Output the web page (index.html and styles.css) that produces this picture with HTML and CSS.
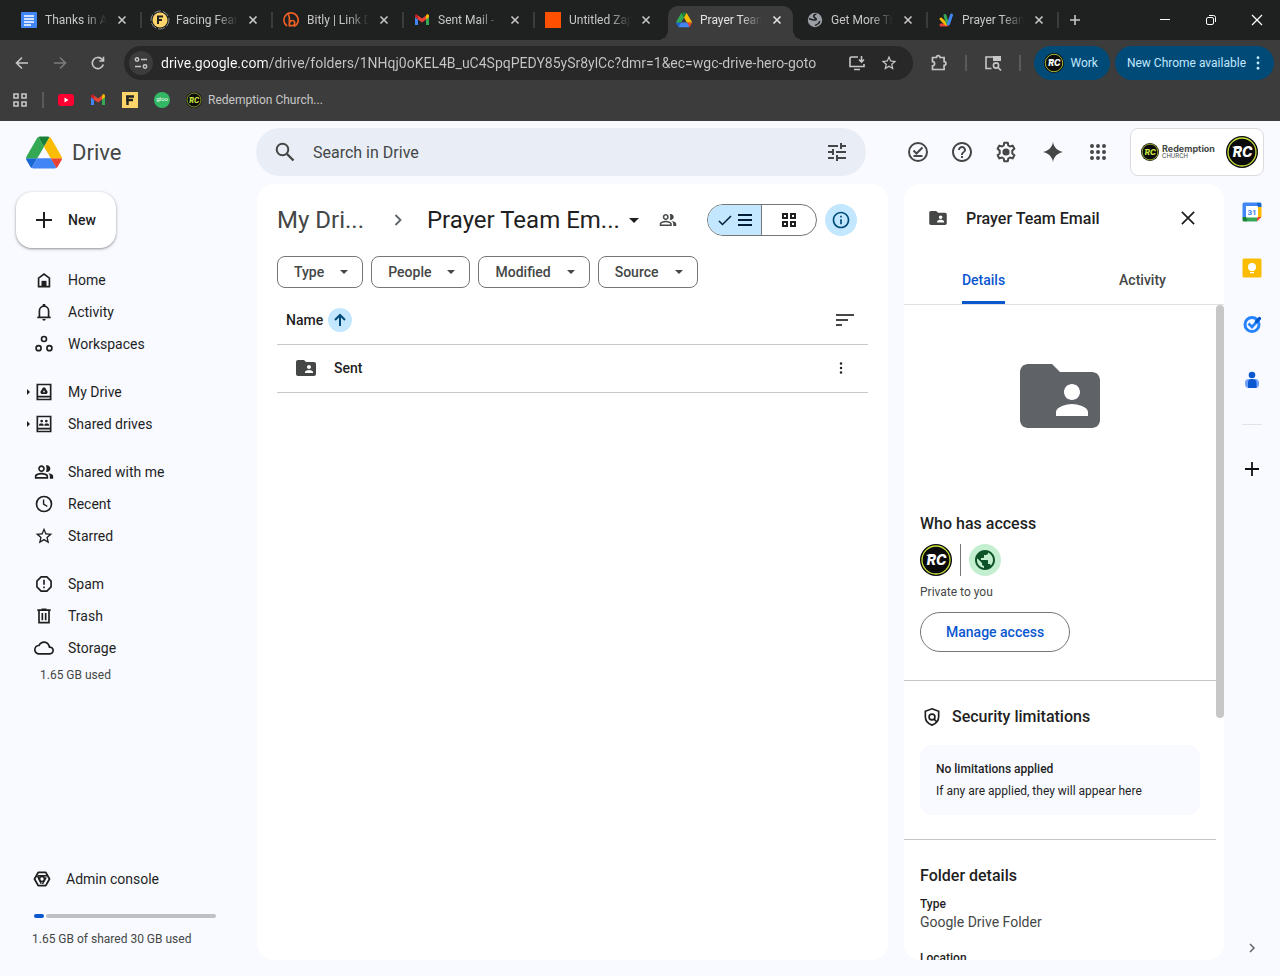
FILE: index.html
```html
<!DOCTYPE html>
<html lang="en">
<head>
  <meta charset="UTF-8">
  <meta name="viewport" content="width=device-width, initial-scale=1.0">
  <title>Prayer Team Email - Google Drive</title>
  <link rel="stylesheet" href="styles.css">
</head>
<body>

  <!-- Shared icons -->
  <svg class="sprite" width="0" height="0" aria-hidden="true">
    <symbol id="i-x" viewBox="0 0 16 16"><path d="M4.500 4.500l7 7M11.500 4.500l-7 7" stroke="currentColor" stroke-width="1.600" fill="none"/></symbol>
    <symbol id="i-gmail" viewBox="0 0 16 16"><path d="M1 3.500v9.500h3V7.500L1 5z" fill="#4285f4"/><path d="M12 13h3V5l-3 2.500z" fill="#34a853"/><path d="M12 3.700v3.800l3-2.300V4c0-1.600-1.700-2-2.600-1.300z" fill="#fbbc04"/><path d="M4 7.500V3.600l4 3 4-3v3.900l-4 3z" fill="#ea4335"/><path d="M1 4v1.200l3 2.300V3.600l-.7-.7C2.300 2.200 1 2.800 1 4z" fill="#c5221f"/></symbol>
    <symbol id="i-drive" viewBox="0 0 87.300 78"><path d="M6.600 66.850l3.850 6.650c.8 1.400 1.950 2.500 3.300 3.300L27.500 53H0c0 1.550.4 3.100 1.200 4.500z" fill="#1967d2"/><path d="M43.650 25L29.900 1.200c-1.350.8-2.500 1.900-3.300 3.300L1.200 48.500C.4 49.900 0 51.450 0 53h27.500z" fill="#34a853"/><path d="M73.550 76.800c1.350-.8 2.500-1.900 3.300-3.300l1.600-2.750L86.100 57.500c.8-1.400 1.200-2.950 1.200-4.500H59.800l5.850 11.500z" fill="#ea4335"/><path d="M43.650 25L57.400 1.200C56.050.4 54.500 0 52.900 0H34.400c-1.600 0-3.150.45-4.500 1.200z" fill="#188038"/><path d="M59.800 53H27.500L13.750 76.800c1.350.8 2.900 1.200 4.500 1.200h50.800c1.600 0 3.150-.45 4.500-1.200z" fill="#4285f4"/><path d="M73.400 26.500L60.700 4.500c-.8-1.400-1.950-2.500-3.300-3.300L43.650 25 59.800 53h27.450c0-1.550-.4-3.100-1.200-4.500z" fill="#fbbc04"/></symbol>
    <symbol id="i-rc" viewBox="0 0 32 32"><circle cx="16" cy="16" r="16" fill="#0b0b0b"/><circle cx="16" cy="16" r="14" fill="none" stroke="#c8e03c" stroke-width="1.300"/><path d="M6 10.700h8l-1 2.200H9z" fill="currentColor"/><text x="16.500" y="21.200" text-anchor="middle" class="rc-text">RC</text></symbol>
    <symbol id="i-folder" viewBox="2 4 20 16"><path d="M20 6h-8l-2-2H4c-1.100 0-2 .9-2 2v12c0 1.100.9 2 2 2h16c1.100 0 2-.9 2-2V8c0-1.100-.9-2-2-2zm-5 3c1.100 0 2 .9 2 2s-.9 2-2 2-2-.9-2-2 .9-2 2-2zm4 8h-8v-1c0-1.330 2.670-2 4-2s4 .67 4 2v1z" fill="currentColor"/></symbol>
    <symbol id="i-caret" viewBox="0 0 10 5"><path d="M0 0h10L5 5z" fill="currentColor"/></symbol>
    <symbol id="i-people" viewBox="0 0 24 24"><path fill="currentColor" d="M9 12c2.200 0 4-1.800 4-4s-1.800-4-4-4-4 1.800-4 4 1.800 4 4 4zm0-6c1.100 0 2 .9 2 2s-.9 2-2 2-2-.9-2-2 .9-2 2-2zm0 7c-2.700 0-8 1.300-8 4v3h16v-3c0-2.700-5.300-4-8-4zm6 5H3v-.99C3.200 16.300 6.300 15 9 15s5.800 1.300 6 2v1zM15.600 4c-.5 0-.9.100-1.300.2C14.700 5.300 15 6.600 15 8s-.3 2.700-.7 3.800c.4.1.8.2 1.300.2 2.200 0 4-1.800 4-4s-1.800-4-4-4zM16.700 13.200C18.100 14.100 19 15.400 19 17v3h4v-3c0-2.200-3.500-3.400-6.300-3.800z"/></symbol>
    <symbol id="i-star" viewBox="0 0 24 24"><path fill="currentColor" d="M22 9.240l-7.190-.62L12 2 9.190 8.630 2 9.240l5.460 4.730L5.820 21 12 17.270 18.180 21l-1.630-7.030L22 9.240zM12 15.400l-3.760 2.270 1-4.280-3.320-2.880 4.380-.38L12 6.100l1.710 4.040 4.380.38-3.320 2.880 1 4.280L12 15.400z"/></symbol>
    <symbol id="i-grid4" viewBox="0 0 16 16"><path d="M2 2h4v4H2zM10 2h4v4h-4zM2 10h4v4H2zM10 10h4v4h-4z" fill="none" stroke="currentColor" stroke-width="2"/></symbol>
    <symbol id="i-globe" viewBox="2 2 20 20"><path fill="currentColor" d="M12 2C6.480 2 2 6.480 2 12s4.480 10 10 10 10-4.480 10-10S17.520 2 12 2zm-1 17.930c-3.950-.49-7-3.850-7-7.930 0-.62.08-1.210.21-1.790L9 15v1c0 1.100.9 2 2 2v1.930zm6.900-2.540c-.26-.81-1-1.390-1.900-1.390h-1v-3c0-.55-.45-1-1-1H8v-2h2c.55 0 1-.45 1-1V7h2c1.100 0 2-.9 2-2v-.41c2.930 1.190 5 4.060 5 7.410 0 2.080-.8 3.970-2.100 5.390z"/></symbol>
    <symbol id="i-chevron" viewBox="0 0 24 24"><path d="M9 6l6 6-6 6" fill="none" stroke="currentColor" stroke-width="2.200"/></symbol>
    <symbol id="i-dots" viewBox="0 0 4 16"><circle cx="2" cy="2" r="1.600"/><circle cx="2" cy="8" r="1.600"/><circle cx="2" cy="14" r="1.600"/></symbol>
  </svg>

  <!-- Tab strip -->
  <div class="tabstrip">
    <div class="tab">
      <svg class="fav" viewBox="0 0 16 16"><rect width="16" height="16" rx="1" fill="#4285f4"/><path d="M3 4h10M3 7h10M3 10h10M3 13h7" stroke="#fff" stroke-width="1.500"/></svg>
      <span class="tab-title">Thanks in A</span>
      <button class="tab-close" aria-label="Close tab"><svg><use href="#i-x"/></svg></button>
    </div>
    <div class="tab">
      <svg class="fav" viewBox="0 0 16 16"><circle cx="8" cy="8" r="9" fill="none" stroke="#8a8a8a" stroke-dasharray="7 2"/><circle cx="8" cy="8" r="7.500" fill="#fdd46a"/><path d="M5 4.500h6M5 8h5M6 4v8" stroke="#222" stroke-width="2"/></svg>
      <span class="tab-title">Facing Fear</span>
      <button class="tab-close" aria-label="Close tab"><svg><use href="#i-x"/></svg></button>
    </div>
    <div class="tab">
      <svg class="fav" viewBox="0 0 16 16"><path d="M4 14a7.200 7.200 0 1 1 7 .6M5.200 2.500c1 1 1.200 2.500 1.200 4v5.500M6.500 14.500c-1-3 .5-6 3-6 2 0 2.500 2 2 3.500-.6 1.800-3 2.300-4.500 1" fill="none" stroke="#ee6123" stroke-width="1.700"/></svg>
      <span class="tab-title">Bitly | Link D</span>
      <button class="tab-close" aria-label="Close tab"><svg><use href="#i-x"/></svg></button>
    </div>
    <div class="tab">
      <svg class="fav"><use href="#i-gmail"/></svg>
      <span class="tab-title">Sent Mail -</span>
      <button class="tab-close" aria-label="Close tab"><svg><use href="#i-x"/></svg></button>
    </div>
    <div class="tab tab-before">
      <svg class="fav" viewBox="0 0 16 16"><rect width="16" height="16" fill="#ff4f00"/></svg>
      <span class="tab-title">Untitled Zap</span>
      <button class="tab-close" aria-label="Close tab"><svg><use href="#i-x"/></svg></button>
    </div>
    <div class="tab tab-active">
      <svg class="fav"><use href="#i-drive"/></svg>
      <span class="tab-title">Prayer Team</span>
      <button class="tab-close" aria-label="Close tab"><svg><use href="#i-x"/></svg></button>
    </div>
    <div class="tab">
      <svg class="fav" viewBox="0 0 16 16"><circle cx="8" cy="8" r="7.200" fill="#9aa0a6"/><path d="M9.500 2.200C6.500 2 6 4.500 7.500 5.500S10 7.500 8.500 8 4 7 2 6.800M8 13.500c2-1 5-2 4.500-4.500" stroke="#1f2020" stroke-width="1.600" fill="none"/></svg>
      <span class="tab-title">Get More Tr</span>
      <button class="tab-close" aria-label="Close tab"><svg><use href="#i-x"/></svg></button>
    </div>
    <div class="tab">
      <svg class="fav" viewBox="0 0 16 16"><g stroke-linecap="round" stroke-width="3"><path d="M3 13h6" stroke="#ea4335"/><path d="M3 7l5 5" stroke="#fbbc04"/><path d="M7 3.500l2.500 8" stroke="#34a853"/><path d="M13.500 3L10.500 12" stroke="#4285f4"/></g></svg>
      <span class="tab-title">Prayer Team</span>
      <button class="tab-close" aria-label="Close tab"><svg><use href="#i-x"/></svg></button>
    </div>
    <button class="tab-new" aria-label="New tab"><svg viewBox="0 0 12 12"><path d="M6 1v10M1 6h10" stroke="currentColor" stroke-width="1.600"/></svg></button>
    <div class="window-controls">
      <button aria-label="Minimize"><svg viewBox="0 0 12 12"><path d="M1 5.500h10" stroke="#fff"/></svg></button>
      <button aria-label="Restore"><svg viewBox="0 0 12 12"><rect x="1.500" y="3.500" width="7" height="7" rx="1.500" fill="none" stroke="#fff"/><path d="M4 1.500h4.500a2 2 0 0 1 2 2V8" fill="none" stroke="#fff"/></svg></button>
      <button aria-label="Close"><svg viewBox="0 0 12 12"><path d="M1 1l10 10M11 1L1 11" stroke="#fff" stroke-width="1.200"/></svg></button>
    </div>
  </div>

  <!-- Toolbar -->
  <div class="toolbar">
    <button class="nav-btn" aria-label="Back"><svg viewBox="0 0 16 16"><path d="M14 8H3M8 2.500L2.500 8 8 13.500" fill="none" stroke="currentColor" stroke-width="1.600"/></svg></button>
    <button class="nav-btn nav-off" aria-label="Forward"><svg viewBox="0 0 16 16"><path d="M2 8h11M8 2.500L13.500 8 8 13.500" fill="none" stroke="currentColor" stroke-width="1.600"/></svg></button>
    <button class="nav-btn" aria-label="Reload"><svg viewBox="0 0 16 16"><path d="M13.300 9.500A5.600 5.600 0 1 1 12 4.200L13.500 6M13.500 1.800V6H9.300" fill="none" stroke="currentColor" stroke-width="1.600"/></svg></button>
    <div class="omnibox">
      <button class="site-info" aria-label="Site information"><svg viewBox="0 0 16 16"><g fill="none" stroke="currentColor" stroke-width="1.500"><circle cx="4" cy="4.500" r="1.700"/><path d="M8 4.500h6M2 11.500h6"/><circle cx="12" cy="11.500" r="1.700"/></g></svg></button>
      <input class="url" type="text" aria-label="Address" value="drive.google.com/drive/folders/1NHqj0oKEL4B_uC4SpqPEDY85ySr8ylCc?dmr=1&amp;ec=wgc-drive-hero-goto">
      <button class="omni-btn" aria-label="Install"><svg viewBox="0 0 18 18"><path d="M10 3H3.500a1.500 1.500 0 0 0-1.500 1.500v8h14V10M6 15.500h6M13.500 2v6M11 5.500L13.500 8 16 5.500" fill="none" stroke="currentColor" stroke-width="1.600"/></svg></button>
      <button class="omni-btn" aria-label="Bookmark"><svg><use href="#i-star"/></svg></button>
    </div>
    <button class="tool-btn" aria-label="Extensions"><svg viewBox="0 0 18 18"><path d="M2.500 3.500h4a1.800 1.800 0 0 1 3.600 0h4v4.200a1.800 1.800 0 0 1 0 3.600v4.200H2.500v-3.700a2 2 0 0 0 0-4.200z" fill="none" stroke="currentColor" stroke-width="1.700"/></svg></button>
    <span class="bar-sep"></span>
    <button class="tool-btn" aria-label="Search tabs"><svg viewBox="0 0 18 18"><path d="M7.500 14.500H2V3h14v4" fill="none" stroke="currentColor" stroke-width="1.600"/><path d="M9 2h8v5H9z" fill="currentColor"/><circle cx="12" cy="11.500" r="2.600" fill="none" stroke="currentColor" stroke-width="1.600"/><path d="M14 13.500l3 3" stroke="currentColor" stroke-width="1.700"/></svg></button>
    <span class="bar-sep"></span>
    <button class="pill pill-work"><svg class="pill-avatar rc"><use href="#i-rc"/></svg>Work</button>
    <button class="pill pill-update">New Chrome available<svg class="pill-dots" fill="#c2e7ff"><use href="#i-dots"/></svg></button>
  </div>

  <!-- Bookmarks -->
  <nav class="bookmarks">
    <button class="bm bm-apps" aria-label="Apps"><svg viewBox="0 0 16 16"><path d="M2 2h4v4H2zM10 2h4v4h-4zM2 10h4v4H2zM10 10h4v4h-4z" fill="none" stroke="#c7c7c7" stroke-width="1.600"/></svg></button>
    <span class="bar-sep bm-sep"></span>
    <a class="bm" href="#" aria-label="YouTube"><svg viewBox="0 0 16 16"><rect y="2" width="16" height="12" rx="3" fill="#ff0033"/><path d="M6.500 5.500v5l4-2.500z" fill="#fff"/></svg></a>
    <a class="bm" href="#" aria-label="Gmail"><svg><use href="#i-gmail"/></svg></a>
    <a class="bm" href="#" aria-label="Faithlife"><svg viewBox="0 0 16 16"><rect width="16" height="16" fill="#fdd46a"/><path d="M4 4.500h8M4 8h7M5.500 4v9" stroke="#222" stroke-width="2.400"/></svg></a>
    <a class="bm" href="#"><span class="gloo">gloo</span></a>
    <a class="bm" href="#"><svg class="rc rc-lime"><use href="#i-rc"/></svg><span>Redemption Church...</span></a>
  </nav>

  <!-- Drive -->
  <div class="drive">
    <header class="header">
      <a class="brand" href="#"><svg class="brand-logo"><use href="#i-drive"/></svg><span>Drive</span></a>
      <form class="search">
        <button type="button" aria-label="Search"><svg viewBox="0 0 24 24"><circle cx="9.500" cy="9.500" r="5.800" fill="none" stroke="currentColor" stroke-width="2"/><path d="M14 14l6.500 6.500" stroke="currentColor" stroke-width="2.400"/></svg></button>
        <input type="text" placeholder="Search in Drive" aria-label="Search in Drive">
        <button type="button" aria-label="Advanced search"><svg viewBox="0 0 24 24"><path fill="currentColor" d="M3 17v2h6v-2H3zM3 5v2h10V5H3zm10 16v-2h8v-2h-8v-2h-2v6h2zM7 9v2H3v2h4v2h2V9H7zm14 4v-2H11v2h10zm-6-4h2V7h4V5h-4V3h-2v6z"/></svg></button>
      </form>
      <div class="header-tools">
        <button aria-label="Ready for offline"><svg viewBox="0 0 24 24"><circle cx="12" cy="12" r="9" fill="none" stroke="currentColor" stroke-width="2"/><path d="M7.500 10.500l3 3 6-6M7.500 16h9" fill="none" stroke="currentColor" stroke-width="2"/></svg></button>
        <button aria-label="Support"><svg viewBox="0 0 24 24"><path fill="currentColor" d="M11 18h2v-2h-2v2zm1-16C6.480 2 2 6.480 2 12s4.480 10 10 10 10-4.480 10-10S17.520 2 12 2zm0 18c-4.410 0-8-3.590-8-8s3.590-8 8-8 8 3.590 8 8-3.590 8-8 8zm0-14c-2.210 0-4 1.790-4 4h2c0-1.100.9-2 2-2s2 .9 2 2c0 2-3 1.750-3 5h2c0-2.250 3-2.500 3-5 0-2.210-1.790-4-4-4z"/></svg></button>
        <button aria-label="Settings"><svg viewBox="0 0 24 24"><path fill="none" stroke="currentColor" stroke-width="2" stroke-linejoin="round" d="M10.200 2.800h3.600l.5 2.700 1.700 1 2.600-.9 1.800 3.100-2.100 1.800v3l2.100 1.800-1.800 3.100-2.600-.9-1.700 1-.5 2.700h-3.600l-.5-2.700-1.700-1-2.600.9-1.800-3.100 2.100-1.800v-3L3.600 8.700l1.800-3.100 2.600.9 1.700-1z"/><circle cx="12" cy="12" r="3.600" fill="currentColor"/></svg></button>
        <button class="tool-gemini" aria-label="Gemini"><svg viewBox="0 0 24 24"><path fill="currentColor" d="M12 2c.8 5.200 4.800 9.200 10 10-5.200.8-9.200 4.800-10 10-.8-5.200-4.800-9.200-10-10 5.200-.8 9.200-4.800 10-10z"/></svg></button>
        <button class="tool-apps" aria-label="Google apps"><svg viewBox="0 0 24 24"><path d="M6 6h0M12 6h0M18 6h0M6 12h0M12 12h0M18 12h0M6 18h0M12 18h0M18 18h0" stroke="currentColor" stroke-width="4" stroke-linecap="round"/></svg></button>
        <button class="account" aria-label="Account">
          <svg class="org-mark rc rc-lime"><use href="#i-rc"/></svg>
          <span class="org"><b>Redemption</b><small>CHURCH</small></span>
          <svg class="avatar rc"><use href="#i-rc"/></svg>
        </button>
      </div>
    </header>

    <aside class="sidebar">
      <button class="new-btn"><svg viewBox="0 0 24 24"><path d="M12 4v16M4 12h16" stroke="currentColor" stroke-width="2"/></svg>New</button>

      <ul class="nav">
        <li><a href="#"><svg viewBox="0 0 24 24"><path d="M5.500 9.800V20h13V9.800L12 4.800z" fill="none" stroke="currentColor" stroke-width="2"/><path d="M9 13h6v7H9z" fill="currentColor"/></svg>Home</a></li>
        <li><a href="#"><svg viewBox="0 0 24 24"><path d="M4 18.500h16M6.500 18v-7.500a5.500 5.500 0 0 1 11 0V18" fill="none" stroke="currentColor" stroke-width="2"/><path d="M10.500 2.500h3V6h-3zM10 20.500h4a2 2 0 0 1-4 0z" fill="currentColor"/></svg>Activity</a></li>
        <li><a href="#"><svg viewBox="0 0 24 24"><g fill="none" stroke="currentColor" stroke-width="2"><circle cx="12" cy="6" r="3"/><circle cx="5.500" cy="17" r="3"/><circle cx="18.500" cy="17" r="3"/></g></svg>Workspaces</a></li>
      </ul>
      <ul class="nav">
        <li class="has-children"><a href="#"><svg viewBox="0 0 24 24"><path d="M4 3h16v18H4zM4 17.500h16" fill="none" stroke="currentColor" stroke-width="2"/><path d="M10.800 6.500h2.400L16.500 12l-1.200 2.300H8.700L7.500 12zM12 9.500l-1.300 2.700h2.600z" fill="currentColor" fill-rule="evenodd"/></svg>My Drive</a></li>
        <li class="has-children"><a href="#"><svg viewBox="0 0 24 24"><path d="M4 3h16v18H4zM4 17.500h16" fill="none" stroke="currentColor" stroke-width="2"/><g fill="currentColor"><circle cx="9.200" cy="8.500" r="1.600"/><circle cx="14.800" cy="8.500" r="1.600"/><path d="M6 14v-1c0-2 5.500-2 5.500 0v1zM12.500 14v-1c0-2 5.500-2 5.500 0v1z"/></g></svg>Shared drives</a></li>
      </ul>
      <ul class="nav">
        <li><a href="#"><svg><use href="#i-people"/></svg>Shared with me</a></li>
        <li><a href="#"><svg viewBox="0 0 24 24"><circle cx="12" cy="12" r="9" fill="none" stroke="currentColor" stroke-width="2"/><path d="M11.500 6.500V12l4.500 3" fill="none" stroke="currentColor" stroke-width="1.700"/></svg>Recent</a></li>
        <li><a href="#"><svg><use href="#i-star"/></svg>Starred</a></li>
      </ul>
      <ul class="nav">
        <li><a href="#"><svg viewBox="0 0 24 24"><path d="M8.500 3.500h7l5 5v7l-5 5h-7l-5-5v-7z" fill="none" stroke="currentColor" stroke-width="2" stroke-linejoin="round"/><path d="M11 7h2v6h-2zM11 15h2v2h-2z" fill="currentColor"/></svg>Spam</a></li>
        <li><a href="#"><svg viewBox="0 0 24 24"><path d="M4 5h16M6 5v15h12V5M10 8.500v8.500M14 8.500v8.500" fill="none" stroke="currentColor" stroke-width="2"/><path d="M9 3h6v2H9z" fill="currentColor"/></svg>Trash</a></li>
        <li><a href="#"><svg viewBox="0 0 24 24"><path fill="currentColor" d="M19.350 10.040C18.670 6.590 15.640 4 12 4 9.110 4 6.600 5.640 5.350 8.040 2.340 8.360 0 10.910 0 14c0 3.310 2.690 6 6 6h13c2.760 0 5-2.240 5-5 0-2.640-2.050-4.780-4.650-4.960zM19 18H6c-2.210 0-4-1.790-4-4 0-2.050 1.530-3.760 3.560-3.970l1.070-.11.500-.95C8.080 7.140 9.940 6 12 6c2.620 0 4.880 1.860 5.390 4.430l.3 1.500 1.530.11c1.560.1 2.780 1.410 2.780 2.960 0 1.650-1.350 3-3 3z"/></svg>Storage</a></li>
      </ul>
      <p class="used">1.65 GB used</p>

      <div class="sidebar-foot">
        <a class="admin" href="#"><svg viewBox="0 0 24 24"><path d="M7.500 4h9l4.500 8-4.500 8h-9L3 12z" fill="none" stroke="currentColor" stroke-width="2.200" stroke-linejoin="round"/><path d="M7.500 8h11M6.500 8l4.500 9.500M17 10L12.500 18" stroke="currentColor" stroke-width="1.800"/><circle cx="12" cy="12" r="3" fill="none" stroke="currentColor" stroke-width="2"/></svg>Admin console</a>
        <div class="meter"><span class="meter-used" style="width: 5.5%"></span><span class="meter-free"></span></div>
        <p>1.65 GB of shared 30 GB used</p>
      </div>
    </aside>

    <main class="files">
      <div class="files-head">
        <nav class="crumbs">
          <a class="crumb-parent" href="#">My Dri...</a>
          <svg class="crumb-chevron"><use href="#i-chevron"/></svg>
          <button class="crumb-current">Prayer Team Em...<svg class="caret"><use href="#i-caret"/></svg></button>
          <button class="share-btn" aria-label="Manage people"><svg><use href="#i-people"/></svg></button>
        </nav>
        <div class="view-toggle">
          <button class="on" aria-label="List layout"><svg class="tick" viewBox="0 0 14 14"><path d="M1 8l3.500 3.500L13 3" fill="none" stroke="currentColor" stroke-width="1.500"/></svg><svg class="lines" viewBox="0 0 14 14"><path d="M0 2h14M0 7h14M0 12h14" stroke="currentColor" stroke-width="2"/></svg></button>
          <button aria-label="Grid layout"><svg class="squares"><use href="#i-grid4"/></svg></button>
        </div>
        <button class="info-btn" aria-label="View details"><svg viewBox="0 0 24 24"><path fill="currentColor" d="M11 7h2v2h-2zm0 4h2v6h-2zm1-9C6.480 2 2 6.480 2 12s4.480 10 10 10 10-4.480 10-10S17.520 2 12 2zm0 18c-4.410 0-8-3.590-8-8s3.590-8 8-8 8 3.590 8 8-3.590 8-8 8z"/></svg></button>
      </div>

      <div class="chips">
        <button>Type<svg><use href="#i-caret"/></svg></button>
        <button>People<svg><use href="#i-caret"/></svg></button>
        <button>Modified<svg><use href="#i-caret"/></svg></button>
        <button>Source<svg><use href="#i-caret"/></svg></button>
      </div>

      <table class="list">
        <thead>
          <tr>
            <th><button class="sort-name">Name<span class="sort-dir"><svg viewBox="0 0 16 16"><path d="M8 14V3M3 8l5-5 5 5" fill="none" stroke="currentColor" stroke-width="2"/></svg></span></button></th>
            <th class="end"><button class="sort-btn" aria-label="Sort"><svg viewBox="0 0 18 12"><path d="M0 1h18M0 6h12M0 11h6" stroke="currentColor" stroke-width="2"/></svg></button></th>
          </tr>
        </thead>
        <tbody>
          <tr>
            <td><a class="file" href="#"><svg><use href="#i-folder"/></svg>Sent</a></td>
            <td class="end"><button class="more-btn" aria-label="More actions"><svg fill="#1f1f1f"><use href="#i-dots"/></svg></button></td>
          </tr>
        </tbody>
      </table>
    </main>

    <section class="details">
      <div class="details-head">
        <svg class="head-folder"><use href="#i-folder"/></svg>
        <h2>Prayer Team Email</h2>
        <button aria-label="Close details"><svg viewBox="0 0 16 16"><path d="M1 1l14 14M15 1L1 15" stroke="currentColor" stroke-width="2"/></svg></button>
      </div>
      <div class="details-tabs">
        <button class="selected"><span>Details</span></button>
        <button><span>Activity</span></button>
      </div>
      <div class="details-scroll">
        <div class="details-body">
          <div class="access">
            <svg class="big-folder"><use href="#i-folder"/></svg>
            <h3>Who has access</h3>
            <div class="who"><svg class="avatar rc"><use href="#i-rc"/></svg><span class="who-sep"></span><span class="public"><svg><use href="#i-globe"/></svg></span></div>
            <p>Private to you</p>
            <button class="manage">Manage access</button>
          </div>
          <div class="security">
            <h3><svg viewBox="0 0 24 24"><path d="M12 2.200l8 3v6.300c0 5-3.200 8.800-8 10.300-4.800-1.500-8-5.300-8-10.300V5.200z" fill="none" stroke="currentColor" stroke-width="2"/><circle cx="12" cy="12" r="3.500" fill="none" stroke="currentColor" stroke-width="2"/><path d="M14.500 14.500l3.500 3.500" stroke="currentColor" stroke-width="2"/></svg>Security limitations</h3>
            <div class="note">
              <strong>No limitations applied</strong>
              <p>If any are applied, they will appear here</p>
            </div>
          </div>
          <div class="folder-info">
            <h3>Folder details</h3>
            <dl>
              <dt>Type</dt>
              <dd>Google Drive Folder</dd>
              <dt>Location</dt>
            </dl>
          </div>
        </div>
        <div class="scrollbar"><span></span></div>
      </div>
    </section>

    <aside class="rail">
      <button aria-label="Calendar"><svg viewBox="0 0 20 20"><path d="M2 .5h13v4.500H5V15H.5V2A1.500 1.500 0 0 1 2 .5z" fill="#4285f4"/><path d="M15 .5h3A1.500 1.500 0 0 1 19.500 2v3H15z" fill="#1967d2"/><path d="M15 5h4.500v10H15z" fill="#fbbc04"/><path d="M5 15h10v4.500H5z" fill="#34a853"/><path d="M.5 15H5v4.500H2A1.500 1.500 0 0 1 .5 18z" fill="#188038"/><path d="M15 15h4.500L15 19.500z" fill="#ea4335"/><path d="M4 4h12v11.500H4z" fill="#fff"/><text x="10" y="13" text-anchor="middle" class="cal-text">31</text></svg></button>
      <button aria-label="Keep"><svg viewBox="0 0 20 20"><rect x=".5" y=".5" width="19" height="19" rx="1.500" fill="#fbbc04"/><circle cx="10" cy="9" r="4" fill="#fff"/><path d="M8 11h4v2H8zM8 14h4v1.300H8z" fill="#fff"/></svg></button>
      <button aria-label="Tasks"><svg viewBox="0 0 20 20"><circle cx="10" cy="10.500" r="7" fill="none" stroke="#2684fc" stroke-width="3"/><path d="M6.500 9.500l3.500 3.500 4.500-5" fill="none" stroke="#2684fc" stroke-width="2.800"/><path d="M14.500 7.500l3-3" stroke="#0057cc" stroke-width="3.200" stroke-linecap="round"/></svg></button>
      <button aria-label="Contacts"><svg viewBox="0 0 20 20"><circle cx="10" cy="5" r="3.300" fill="#0b57d0"/><rect x="3" y="9" width="14" height="9" rx="4" fill="#6ea0ff"/><path d="M10 9c3 0 4.500 1.500 4.500 4v5H6v-5c0-2.500 1-4 4-4z" fill="#0b57d0"/></svg></button>
      <hr>
      <button aria-label="Get add-ons"><svg viewBox="0 0 20 20"><path d="M10 3v14M3 10h14" stroke="#111" stroke-width="1.800"/></svg></button>
      <button class="rail-hide" aria-label="Hide side panel"><svg class="hide-icon"><use href="#i-chevron"/></svg></button>
    </aside>
  </div>
</body>
</html>
```
FILE: styles.css
```css
* {
  box-sizing: border-box;
}

body {
  margin: 0;
  height: 100vh;
  display: flex;
  flex-direction: column;
  overflow: hidden;
  background: #f8faff;
  color: #1f1f1f;
  font-family: Roboto, Arial, sans-serif;
  font-size: 14px;
}

button {
  display: flex;
  align-items: center;
  justify-content: center;
  margin: 0;
  padding: 0;
  border: none;
  background: none;
  color: inherit;
  font: inherit;
  cursor: pointer;
}

input {
  min-width: 0;
  padding: 0;
  border: none;
  outline: none;
  background: none;
  font: inherit;
}

a {
  color: inherit;
  text-decoration: none;
}

p, h2, h3, ul, dl, dd {
  margin: 0;
  padding: 0;
}

svg {
  flex: none;
  overflow: visible;
}

.sprite {
  position: absolute;
}

.rc {
  color: #fff;
}

.rc-lime {
  color: #c8e03c;
}

.rc-text {
  font: italic 800 14px Inter, sans-serif;
  fill: currentColor;
}

/* Browser tabs */
.tabstrip,
.toolbar,
.bookmarks {
  flex: none;
  display: flex;
  align-items: center;
  font-size: 12px;
  color: #c7c7c7;
}

.tabstrip {
  height: 40px;
  padding-left: 10px;
  background: #1f2020;
}

.tab {
  position: relative;
  flex: 0 1 131px;
  min-width: 0;
  display: flex;
  align-items: center;
  height: 34px;
  margin-top: 6px;
  padding: 0 11px 6px;
  border-radius: 10px 10px 0 0;
}

.tab::after {
  content: "";
  position: absolute;
  right: -1px;
  top: 6px;
  width: 2px;
  height: 16px;
  background: #3c3c3c;
}

.tab-before::after {
  display: none;
}

.tab-active {
  flex-basis: 125px;
  margin-right: 3px;
  margin-left: 3px;
  padding: 0 8px 6px;
  color: #e3e3e3;
  background: #3c3c3c;
}

/* Flared feet of the open tab */
.tab-active::before,
.tab-active::after {
  content: "";
  position: absolute;
  top: auto;
  bottom: 0;
  width: 10px;
  height: 10px;
}

.tab-active::before {
  left: -10px;
  background: radial-gradient(circle at 0 0, transparent 10px, #3c3c3c 10px);
}

.tab-active::after {
  right: -10px;
  background: radial-gradient(circle at 100% 0, transparent 10px, #3c3c3c 10px);
}

.fav {
  width: 16px;
  height: 16px;
}

.tab-title {
  flex: 1;
  min-width: 0;
  margin: 0 7px 0 8px;
  overflow: hidden;
  white-space: nowrap;
  -webkit-mask-image: linear-gradient(to right, #000 65%, transparent);
  mask-image: linear-gradient(to right, #000 65%, transparent);
}

.tab-close,
.tab-close svg {
  width: 16px;
  height: 16px;
}

.tab-new {
  width: 34px;
  height: 34px;
}

.tab-new svg,
.window-controls svg {
  width: 12px;
  height: 12px;
}

.window-controls {
  display: flex;
  margin-left: auto;
}

.window-controls button {
  width: 46px;
  height: 40px;
}

/* Browser toolbar */
.toolbar {
  height: 46px;
  padding: 0 6px 0 7px;
  background: #3c3c3c;
}

.nav-btn {
  width: 30px;
  height: 30px;
  margin-right: 8px;
}

.nav-btn svg {
  width: 16px;
  height: 16px;
}

.nav-off {
  color: #7c7c7c;
}

.omnibox {
  flex: 1;
  display: flex;
  align-items: center;
  height: 34px;
  margin: 0 9px 0 3px;
  padding: 0 8px 0 5px;
  border-radius: 17px;
  background: #282828;
}

.site-info {
  width: 24px;
  height: 24px;
  border-radius: 50%;
  background: #3c3c3c;
}

.site-info svg {
  width: 16px;
  height: 16px;
}

.url {
  flex: 1;
  margin-left: 8px;
  font-size: 14px;
  color: transparent;
  background: linear-gradient(to right, #fff 106px, #c7c7c7 106px);
  -webkit-background-clip: text;
  background-clip: text;
}

.omni-btn {
  width: 32px;
  height: 32px;
}

.omni-btn svg,
.tool-btn svg {
  width: 18px;
  height: 18px;
}

.tool-btn {
  width: 34px;
  height: 34px;
}

.bar-sep {
  width: 2px;
  height: 16px;
  margin: 0 9px;
  background: #5a5a5a;
}

.pill {
  height: 34px;
  border-radius: 17px;
  background: #004a77;
  color: #c2e7ff;
}

.pill-work {
  margin-left: 4px;
  padding: 0 12px 0 10px;
}

.pill-avatar {
  width: 20px;
  height: 20px;
  margin-right: 6px;
}

.pill-update {
  margin-left: 5px;
  padding: 0 14px 0 12px;
}

.pill-dots {
  width: 4px;
  height: 14px;
  margin-left: 10px;
}

/* Bookmarks bar */
.bookmarks {
  height: 35px;
  padding: 0 12px 7px;
  background: #3c3c3c;
}

.bm {
  display: flex;
  align-items: center;
  gap: 6px;
  margin-right: 16px;
}

.bm svg {
  width: 16px;
  height: 16px;
}

.bm-apps {
  margin-right: 5px;
}

.bm-sep {
  margin-right: 14px;
}

.gloo {
  width: 16px;
  height: 16px;
  border-radius: 50%;
  background: #34b765;
  color: #fff;
  font-size: 6px;
  line-height: 14px;
  text-align: center;
}

/* Drive layout */
.drive {
  flex: 1;
  min-height: 0;
  display: grid;
  grid-template-columns: 257px 1fr 320px 56px;
  grid-template-rows: 63px 1fr;
}

.header {
  grid-column: 1 / -1;
  display: flex;
  align-items: center;
  padding: 7px 16px 8px 26px;
  color: #444746;
}

.brand {
  display: flex;
  align-items: center;
  gap: 10px;
  width: 230px;
  font-size: 22px;
}

.brand-logo {
  width: 36px;
  height: 33px;
}

.search {
  flex: 1;
  display: flex;
  align-items: center;
  height: 48px;
  padding: 0 9px;
  border-radius: 24px;
  background: #e9eef6;
}

.search button,
.header-tools > button {
  width: 40px;
  height: 40px;
}

.search svg,
.header-tools svg {
  width: 24px;
  height: 24px;
}

.search input {
  flex: 1;
  margin-left: 8px;
  font-size: 16px;
  color: #1f1f1f;
}

.search input::placeholder {
  color: #444746;
  opacity: 1;
}

.header-tools {
  display: flex;
  align-items: center;
  gap: 4px;
  margin-left: 32px;
}

.header-tools .tool-gemini {
  margin: 0 1px 0 3px;
}

.header-tools .account {
  justify-content: flex-start;
  width: 134px;
  height: 48px;
  margin-left: 8px;
  padding: 0 5px 0 10px;
  border: 1px solid #dadce0;
  border-radius: 8px;
  background: #fff;
}

.header-tools .org-mark {
  width: 18px;
  height: 18px;
}

.org {
  margin-left: 3px;
  text-align: left;
  font-family: Inter, sans-serif;
  font-size: 9px;
  line-height: 8px;
}

.org b,
.org small {
  display: block;
}

.org small {
  font-size: 6px;
  line-height: 6px;
}

.header-tools .avatar,
.avatar {
  width: 32px;
  height: 32px;
}

.account .avatar {
  margin-left: auto;
}

/* Sidebar */
.sidebar {
  display: flex;
  flex-direction: column;
  padding: 8px 16px 29px;
}

.new-btn {
  align-self: flex-start;
  gap: 12px;
  height: 56px;
  margin-bottom: 16px;
  padding: 0 20px 0 16px;
  border-radius: 16px;
  background: #fff;
  box-shadow: 0 1px 2px rgba(60, 64, 67, 0.4), 0 1px 3px 1px rgba(60, 64, 67, 0.15);
  font-weight: 500;
}

.new-btn svg {
  width: 24px;
  height: 24px;
}

.nav {
  margin-bottom: 16px;
  list-style: none;
}

.nav a,
.admin {
  display: flex;
  align-items: center;
  gap: 14px;
  height: 32px;
  padding-left: 18px;
}

.nav svg {
  width: 20px;
  height: 20px;
}

.has-children {
  position: relative;
}

.has-children::before {
  content: "";
  position: absolute;
  left: 11px;
  top: 13px;
  border: 3px solid transparent;
  border-left-color: #1f1f1f;
  border-right: none;
}

.used {
  margin: -13px 0 0 24px;
  font-size: 12px;
  line-height: 16px;
  color: #444746;
}

.sidebar-foot {
  margin-top: auto;
}

.admin {
  padding-left: 16px;
}

.admin svg {
  width: 20px;
  height: 20px;
}

.meter {
  display: flex;
  gap: 2px;
  height: 4px;
  margin: 19px 25px 13px 18px;
}

.meter span {
  border-radius: 2px;
}

.meter-used {
  background: #0b57d0;
}

.meter-free {
  flex: 1;
  background: #bdc1c6;
}

.sidebar-foot p {
  margin-left: 16px;
  font-size: 12px;
  line-height: 16px;
  color: #444746;
}

/* File list */
.files {
  margin: 0 16px 16px 0;
  padding: 16px 20px;
  border-radius: 16px;
  background: #fff;
}

.files-head {
  display: flex;
  align-items: center;
  height: 40px;
  padding-right: 11px;
}

.crumbs {
  flex: 1;
  display: flex;
  align-items: center;
  font-size: 24px;
  white-space: nowrap;
}

.crumb-parent {
  color: #444746;
}

.crumb-chevron {
  width: 20px;
  height: 20px;
  margin: 0 19px 0 24px;
  color: #5f6368;
}

.caret {
  width: 10px;
  height: 5px;
  margin-left: 9px;
}

.share-btn {
  margin-left: 20px;
  color: #444746;
}

.share-btn svg {
  width: 18px;
  height: 18px;
}

.view-toggle {
  display: flex;
  height: 32px;
  border: 1px solid #747775;
  border-radius: 16px;
  overflow: hidden;
}

.view-toggle button {
  gap: 6px;
  width: 54px;
}

.view-toggle .on {
  border-right: 1px solid #747775;
  background: #c2e7ff;
  color: #001d35;
}

.tick,
.lines {
  width: 14px;
  height: 14px;
}

.squares {
  width: 16px;
  height: 16px;
}

.info-btn {
  width: 32px;
  height: 32px;
  margin-left: 8px;
  border-radius: 50%;
  background: #c2e7ff;
  color: #004a77;
}

.info-btn svg {
  width: 20px;
  height: 20px;
}

.chips {
  display: flex;
  gap: 8px;
  margin: 16px 0 8px;
}

.chips button {
  gap: 16px;
  height: 32px;
  padding: 0 14px 0 16px;
  border: 1px solid #747775;
  border-radius: 8px;
  color: #444746;
  font-weight: 500;
}

.chips svg {
  width: 8px;
  height: 4px;
}

.list {
  width: 100%;
  border-collapse: collapse;
}

.list th,
.list td {
  height: 48px;
  padding: 0;
  border-bottom: 1px solid #c7c7c7;
  font-weight: 500;
  text-align: left;
}

.list .end {
  width: 60px;
}

.sort-name {
  gap: 5px;
  margin-left: 9px;
}

.sort-dir {
  display: flex;
  align-items: center;
  justify-content: center;
  width: 24px;
  height: 24px;
  border-radius: 50%;
  background: #c2e7ff;
  color: #004a77;
}

.sort-dir svg {
  width: 16px;
  height: 16px;
}

.sort-btn,
.more-btn {
  margin-left: auto;
}

.sort-btn {
  margin-right: 14px;
  color: #444746;
}

.sort-btn svg {
  width: 18px;
  height: 12px;
}

.more-btn {
  margin-right: 25px;
}

.more-btn svg {
  width: 4px;
  height: 12px;
}

.file {
  display: flex;
  align-items: center;
  gap: 18px;
  padding-left: 19px;
}

.file svg {
  width: 20px;
  height: 16px;
  color: #444746;
}

/* Details panel */
.details {
  display: flex;
  flex-direction: column;
  min-height: 0;
  margin-bottom: 16px;
  border-radius: 16px;
  background: #fff;
  overflow: hidden;
}

.details-head {
  display: flex;
  align-items: center;
  height: 68px;
  padding: 0 29px 0 25px;
}

.head-folder {
  width: 18px;
  height: 14px;
  color: #444746;
}

.details-head h2 {
  flex: 1;
  margin-left: 19px;
  font-size: 16px;
  font-weight: 500;
}

.details-head button svg {
  width: 14px;
  height: 14px;
}

.details-tabs {
  flex: none;
  display: flex;
  height: 53px;
  padding-right: 2px;
  border-bottom: 1px solid #e0e0e0;
  color: #444746;
  font-weight: 500;
}

.details-tabs button {
  flex: 1;
}

.details-tabs span {
  height: 52px;
  padding: 20px 0 12px;
}

.details-tabs .selected {
  color: #0b57d0;
}

.selected span {
  border-bottom: 3px solid #0b57d0;
}

.details-scroll {
  flex: 1;
  min-height: 0;
  display: flex;
}

.details-body {
  flex: 1;
  overflow: hidden;
}

.details-body h3 {
  font-size: 16px;
  font-weight: 500;
  line-height: 24px;
}

.access,
.security,
.folder-info {
  padding: 24px 16px;
  border-bottom: 1px solid #c4c7c5;
}

.access {
  padding: 59px 16px 28px;
}

.big-folder {
  display: block;
  width: 80px;
  height: 64px;
  margin: 0 auto 84px;
  color: #5f6368;
}

.who {
  display: flex;
  align-items: center;
  gap: 8px;
  margin: 8px 0;
}

.who-sep {
  width: 1px;
  height: 32px;
  background: #747775;
}

.public {
  display: flex;
  align-items: center;
  justify-content: center;
  width: 32px;
  height: 32px;
  border-radius: 50%;
  background: #c4eed0;
  color: #0d5327;
}

.public svg {
  width: 20px;
  height: 20px;
}

.access p {
  font-size: 12px;
  line-height: 16px;
  color: #444746;
}

.manage {
  height: 40px;
  margin-top: 12px;
  padding: 0 25px;
  border: 1px solid #747775;
  border-radius: 20px;
  color: #0b57d0;
  font-weight: 500;
}

.security h3 {
  display: flex;
  align-items: center;
  gap: 10px;
  padding-left: 2px;
}

.security h3 svg {
  width: 20px;
  height: 20px;
}

.note {
  margin-top: 16px;
  padding: 14px 16px;
  border-radius: 12px;
  background: #f8faff;
  font-size: 12px;
  line-height: 20px;
}

.note strong {
  display: block;
  margin-bottom: 2px;
  font-weight: 500;
}

.folder-info dl {
  margin-top: 7px;
  line-height: 18px;
}

.folder-info dt {
  font-size: 12px;
  font-weight: 500;
}

.folder-info dd {
  margin-bottom: 18px;
  color: #444746;
}

.scrollbar {
  width: 8px;
}

.scrollbar span {
  display: block;
  height: 63%;
  border-radius: 4px;
  background: #c7c7c7;
}

/* Side rail */
.rail {
  display: flex;
  flex-direction: column;
  align-items: center;
  padding: 8px 0 8px;
}

.rail button {
  width: 40px;
  height: 40px;
  margin-bottom: 16px;
}

.rail svg {
  width: 20px;
  height: 20px;
}

.rail hr {
  width: 20px;
  margin: 8px 0 24px;
  border: none;
  border-top: 1px solid #e0e2e6;
}

.rail .rail-hide {
  margin: auto 0 0;
}

.rail .hide-icon {
  width: 16px;
  height: 16px;
  color: #5f6368;
}

.cal-text {
  font: 700 8px Roboto, sans-serif;
  fill: #4285f4;
}
```
